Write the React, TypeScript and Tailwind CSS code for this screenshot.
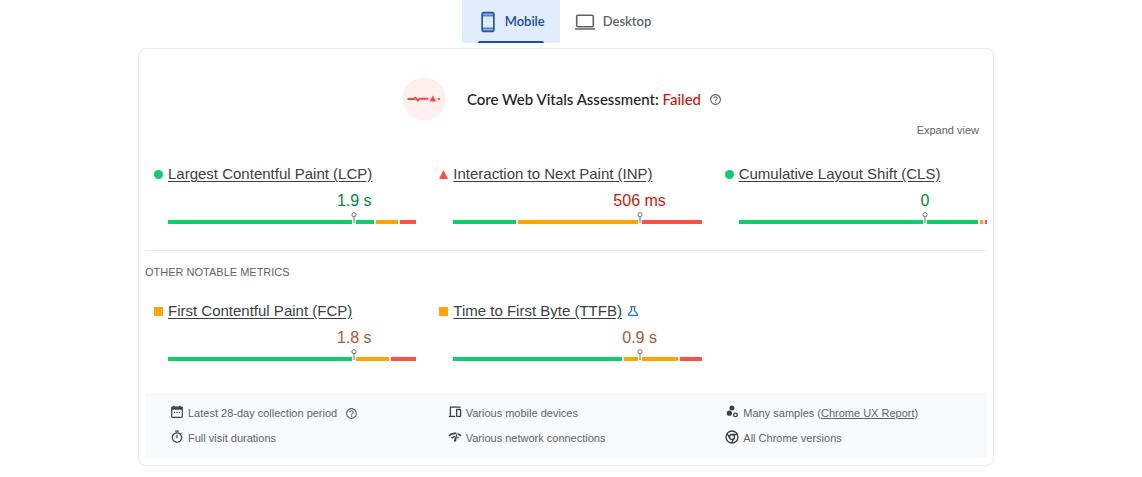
import React, { useState } from 'react'
import { MdHelpOutline, MdNetworkCheck, MdOutlineTimer } from 'react-icons/md'

type Device = 'mobile' | 'desktop'
type Rating = 'good' | 'average' | 'poor'

interface Metric {
  title: string
  value: string
  rating: Rating
  experimental?: boolean
  // share of good / average / poor page loads
  split: [number, number, number]
}

const coreMetrics: Metric[] = [
  { title: 'Largest Contentful Paint (LCP)', value: '1.9 s', rating: 'good', split: [84.5, 9, 6.5] },
  { title: 'Interaction to Next Paint (INP)', value: '506 ms', rating: 'poor', split: [25.5, 50, 24.5] },
  { title: 'Cumulative Layout Shift (CLS)', value: '0', rating: 'good', split: [98, 1, 1] },
]

const otherMetrics: Metric[] = [
  { title: 'First Contentful Paint (FCP)', value: '1.8 s', rating: 'average', split: [75.5, 14, 10.5] },
  { title: 'Time to First Byte (TTFB)', value: '0.9 s', rating: 'average', experimental: true, split: [69, 22, 9] },
]

const valueColors: Record<Rating, string> = {
  good: 'text-[#018642]',
  average: 'text-[#a85c32]',
  poor: 'text-[#d11507]',
}

const PhoneIcon = () => (
  <svg viewBox="0 0 14 22" className="w-3.5 h-[22px]" fill="none" aria-hidden="true">
    <rect x="1.2" y="1.7" width="11.6" height="18.6" rx="1.3" fill="#8fb0e3" stroke="#2257b0" strokeWidth="1.8" />
    <path d="M2 5h10M2 17h10" stroke="#2257b0" strokeWidth="1.2" />
    <path d="M2 5.5h10v11H2z" fill="#e1ecfc" />
  </svg>
)

const LaptopIcon = () => (
  <svg viewBox="0 0 20 16" className="w-5 h-4" fill="none" stroke="#5f6368" aria-hidden="true">
    <rect x="1.7" y="1.3" width="16.6" height="11.4" rx="1.2" strokeWidth="1.6" />
    <path d="M0 15h20" strokeWidth="1.5" />
  </svg>
)

const PulseIcon = () => (
  <svg viewBox="0 0 44 44" className="w-11 h-11 shrink-0" aria-hidden="true">
    <circle cx="22" cy="22" r="21.7" fill="#fff0ef" />
    <path d="M5.5 22h6.3l1.4-1.2 1.4 1.2 1.4 1.6 1.6-1.8h8.6" fill="none" stroke="#f5473c" strokeWidth="1.9" />
    <path d="M30.8 18.6l3.3 6h-6.6z" fill="#f5473c" />
    <path d="M35.8 21.1h2.2v1.8h-2.2z" fill="#f5473c" />
  </svg>
)

const FlaskIcon = () => (
  <svg viewBox="0 0 12 12" className="w-3 h-3" fill="none" stroke="#1a73e8" strokeWidth="1.2" aria-hidden="true">
    <path d="M3.5 1.6h5M4.5 1.6v3.9L1.6 9.4c-.4.6-.1 1 .4 1h8c.5 0 .8-.4.4-1L7.5 5.5V1.6" />
  </svg>
)

const CalendarIcon = () => (
  <svg viewBox="0 0 14 14" className="w-3.5 h-3.5" fill="none" stroke="#3c4043" aria-hidden="true">
    <rect x="1.7" y="2.2" width="10.6" height="10.1" rx=".8" strokeWidth="1.2" />
    <path d="M1.7 3.5h10.6" strokeWidth="2.4" />
    <path d="M4 .8v2M10 .8v2" strokeWidth="1.3" />
    <path d="M4 7.3h1.2M6.4 7.3h1.2M8.8 7.3H10" strokeWidth="1.2" />
  </svg>
)

const DevicesIcon = () => (
  <svg viewBox="0 0 14 14" className="w-3.5 h-3.5" fill="none" stroke="#3c4043" strokeWidth="1.3" aria-hidden="true">
    <path d="M12.6 2.1H2.4v8.6M.8 11.4h6.4" />
    <rect x="8.6" y="4.5" width="4" height="6.9" rx=".4" />
  </svg>
)

const SamplesIcon = () => (
  <svg viewBox="0 0 14 14" className="w-3.5 h-3.5" fill="#3c4043" aria-hidden="true">
    <circle cx="6.9" cy="3.1" r="2.5" />
    <circle cx="4.4" cy="8.2" r="2.6" />
    <circle cx="10.4" cy="9.9" r="1.8" fill="none" stroke="#3c4043" strokeWidth="1.3" />
  </svg>
)

const ChromeIcon = () => (
  <svg viewBox="0 0 14 14" className="w-3.5 h-3.5" fill="none" stroke="#3c4043" strokeWidth="1.3" aria-hidden="true">
    <circle cx="7" cy="7" r="6" />
    <circle cx="7" cy="7" r="2.5" />
    <path d="M7 4.5h5.4M4.8 8.2L2.1 3.6M9.2 8.2L6.5 12.9" />
  </svg>
)

const RatingMarker: React.FC<{ rating: Rating }> = ({ rating }) => {
  if (rating === 'good') return <span className="w-[9px] h-[9px] rounded-full bg-[#0cce6b]" />
  if (rating === 'average') return <span className="w-[9px] h-[9px] bg-[#ffa400]" />
  return (
    <svg viewBox="0 0 9 9" className="w-[9px] h-[9px]" aria-hidden="true">
      <path d="M4.5 0L9 9H0z" fill="#ff4e42" />
    </svg>
  )
}

const MetricCard: React.FC<{ metric: Metric }> = ({ metric }) => {
  const [good, average, poor] = metric.split

  return (
    <div className="pl-[23px]">
      <div className="flex items-center h-5 gap-[5px] -ml-3.5">
        <RatingMarker rating={metric.rating} />
        <a href="#metric" className="text-[15px] leading-5 text-[#3c4043] underline underline-offset-2 whitespace-nowrap">
          {metric.title}
        </a>
        {metric.experimental && <FlaskIcon />}
      </div>
      <div className={`ml-auto w-1/2 mt-[7px] text-center text-base leading-5 ${valueColors[metric.rating]}`}>
        {metric.value}
      </div>
      <div className="relative mt-[9px] flex h-1 gap-0.5">
        <div className="bg-[#0cce6b]" style={{ flexGrow: good }} />
        <div className="bg-[#ffa400]" style={{ flexGrow: average }} />
        <div className="bg-[#ff4e42]" style={{ flexGrow: poor }} />
        {/* 75th percentile pin */}
        <svg viewBox="0 0 6 12" className="absolute left-3/4 -translate-x-1/2 bottom-0 w-1.5 h-3" aria-hidden="true">
          <path d="M1 8h4v4H1z" fill="#fff" />
          <circle cx="3" cy="2.7" r="2.1" fill="#fff" stroke="#757575" />
          <path d="M3 5v6" stroke="#757575" />
        </svg>
      </div>
    </div>
  )
}

const InfoItem: React.FC<{ icon: React.ReactNode; children: React.ReactNode }> = ({ icon, children }) => (
  <li className="flex items-center gap-1 h-[25px] whitespace-nowrap">
    <span className="mb-[3px] text-[#3c4043]">{icon}</span>
    <span>{children}</span>
  </li>
)

const App: React.FC = () => {
  const [device, setDevice] = useState<Device>('mobile')

  const tabClass = (name: Device) =>
    `relative flex items-center h-[43px] text-[13px] font-semibold ${
      device === name ? 'bg-[#e1ecfc] text-[#174ea6]' : 'text-[#5f6368]'
    }`

  const underline = <span className="absolute bottom-0 inset-x-4 h-0.5 rounded-t bg-[#174ea6]" />

  return (
    <div className="bg-white pr-2.5 font-['Liberation_Sans',Arial,sans-serif]">
      {/* Device tabs */}
      <div role="tablist" className="flex justify-center font-['Lato',sans-serif]">
        <button
          role="tab"
          aria-selected={device === 'mobile'}
          onClick={() => setDevice('mobile')}
          className={`${tabClass('mobile')} gap-2.5 pl-[19px] pr-[15px]`}
        >
          <PhoneIcon />
          Mobile
          {device === 'mobile' && underline}
        </button>
        <button
          role="tab"
          aria-selected={device === 'desktop'}
          onClick={() => setDevice('desktop')}
          className={`${tabClass('desktop')} gap-2 pl-[15px] pr-[19px]`}
        >
          <LaptopIcon />
          Desktop
          {device === 'desktop' && underline}
        </button>
      </div>

      <main className="mx-auto mt-[5px] max-w-[856px] rounded-lg border border-[#e8eaed] p-1.5 pb-[7px]">
        {/* Assessment result */}
        <div className="flex items-center justify-center gap-[21px] pt-[22px] pr-2">
          <PulseIcon />
          <h1 className="flex items-center gap-2 font-['Lato',sans-serif] text-[15px] font-medium text-[#202124]">
            <span>
              Core Web Vitals Assessment: <span className="text-[#d11507]">Failed</span>
            </span>
            <MdHelpOutline className="w-[13px] h-[13px] text-[#5f6368]" />
          </h1>
        </div>

        <div className="flex justify-end pt-px pr-2">
          <button className="text-[11px] leading-4 text-[#5f6368]">Expand view</button>
        </div>

        <section className="grid grid-cols-3 gap-3.5 mt-[26px]">
          {coreMetrics.map((metric) => (
            <MetricCard key={metric.title} metric={metric} />
          ))}
        </section>

        <hr className="mt-[26px] border-[#e8eaed]" />

        <h2 className="mt-[13px] text-[11px] leading-4 text-[#5f6368]">OTHER NOTABLE METRICS</h2>

        <section className="grid grid-cols-3 gap-3.5 mt-[21px]">
          {otherMetrics.map((metric) => (
            <MetricCard key={metric.title} metric={metric} />
          ))}
        </section>

        {/* Data collection details */}
        <ul className="mt-8 grid grid-cols-3 gap-x-4 bg-[#f8fafb] pt-2 pb-[7px] pl-[25px] text-[11px] text-[#5f6368]">
          <InfoItem icon={<CalendarIcon />}>
            <span className="flex items-center gap-2">
              Latest 28-day collection period
              <MdHelpOutline className="w-[13px] h-[13px]" />
            </span>
          </InfoItem>
          <InfoItem icon={<DevicesIcon />}>Various mobile devices</InfoItem>
          <InfoItem icon={<SamplesIcon />}>
            Many samples (<a href="#crux" className="underline">Chrome UX Report</a>)
          </InfoItem>
          <InfoItem icon={<MdOutlineTimer className="w-3.5 h-3.5" />}>Full visit durations</InfoItem>
          <InfoItem icon={<MdNetworkCheck className="w-3.5 h-3.5" />}>Various network connections</InfoItem>
          <InfoItem icon={<ChromeIcon />}>All Chrome versions</InfoItem>
        </ul>
      </main>
    </div>
  )
}

export default App
